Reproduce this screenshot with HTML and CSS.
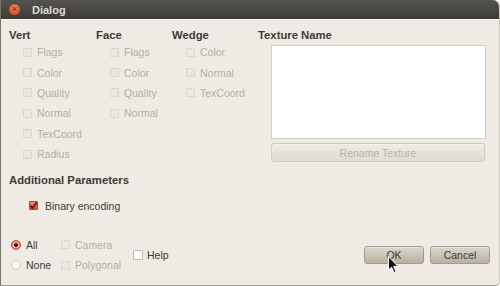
FILE: index.html
```html
<!DOCTYPE html>
<html lang="en">
<head>
    <title>Dialog</title>
    <link rel="stylesheet" href="styles.css">
</head>
<body>
    <div class="window">
        <div class="titlebar">
            <span class="close-btn">&times;</span>
            <span class="title">Dialog</span>
        </div>
        <div class="content">
            <div class="groups">
                <div class="group vert">
                    <h2>Vert</h2>
                    <ul class="checks">
                        <li class="check disabled"><span class="box"></span>Flags</li>
                        <li class="check disabled"><span class="box"></span>Color</li>
                        <li class="check disabled"><span class="box"></span>Quality</li>
                        <li class="check disabled"><span class="box"></span>Normal</li>
                        <li class="check disabled"><span class="box"></span>TexCoord</li>
                        <li class="check disabled"><span class="box"></span>Radius</li>
                    </ul>
                </div>
                <div class="group face">
                    <h2>Face</h2>
                    <ul class="checks">
                        <li class="check disabled"><span class="box"></span>Flags</li>
                        <li class="check disabled"><span class="box"></span>Color</li>
                        <li class="check disabled"><span class="box"></span>Quality</li>
                        <li class="check disabled"><span class="box"></span>Normal</li>
                    </ul>
                </div>
                <div class="group wedge">
                    <h2>Wedge</h2>
                    <ul class="checks">
                        <li class="check disabled"><span class="box"></span>Color</li>
                        <li class="check disabled"><span class="box"></span>Normal</li>
                        <li class="check disabled"><span class="box"></span>TexCoord</li>
                    </ul>
                </div>
                <div class="group texture">
                    <h2>Texture Name</h2>
                    <div class="texture-list"></div>
                    <button class="btn rename" disabled>Rename Texture</button>
                </div>
            </div>

            <h2 class="params-title">Additional Parameters</h2>
            <div class="check binary"><span class="box checked">
                <svg width="9" height="9" viewBox="0 0 9 9"><path d="M1.5 4.5 L3.6 7 L7.6 1.6" fill="none" stroke="#3a1d18" stroke-width="1.6"/></svg>
            </span>Binary encoding</div>

            <div class="bottom">
                <div class="radios">
                    <div class="radio"><span class="dot selected"></span>All</div>
                    <div class="radio"><span class="dot"></span>None</div>
                </div>
                <div class="extra">
                    <div class="check disabled"><span class="box"></span>Camera</div>
                    <div class="check disabled"><span class="box"></span>Polygonal</div>
                </div>
                <div class="check help"><span class="box"></span>Help</div>
                <div class="actions">
                    <button class="btn">OK</button>
                    <button class="btn">Cancel</button>
                </div>
            </div>
        </div>

        <!-- mouse pointer resting on OK -->
        <svg class="cursor" width="12" height="18" viewBox="0 0 12 18">
            <path d="M0.5 0.5 L0.5 14 L3.6 11.2 L6 16.6 L8 15.7 L5.7 10.5 L10 10.5 Z" fill="#111" stroke="#fff" stroke-width="1"/>
        </svg>
    </div>
</body>
</html>
```

FILE: styles.css
```css
html {
    background: #f4f4f2;
}

body {
    margin: 0;
    font-family: 'Liberation Sans', Arial, sans-serif;
    font-size: 10.5px;
    color: #3c3b37;
}

.window {
    position: relative;
    width: 500px;
    height: 286px;
    box-sizing: border-box;
    background-color: #efebe4;
    border-left: 1px solid #7a746a;
    border-right: 1px solid #cdc7bd;
    border-bottom: 1px solid #9f988c;
    border-radius: 0 7px 5px 0;
    overflow: hidden;
}

.titlebar {
    height: 19px;
    display: flex;
    align-items: center;
    background: linear-gradient(#54534e, #3c3b37);
    border-bottom: 1px solid #f8f6f2;
}

.close-btn {
    width: 11px;
    height: 11px;
    margin: 0 12px 0 8px;
    border-radius: 50%;
    background: radial-gradient(circle at 50% 35%, #f58a62, #d9522a 65%, #a8391b);
    color: #5a1f0e;
    font-size: 9px;
    line-height: 11px;
    text-align: center;
}

.title {
    color: #dfdbd2;
    font-weight: bold;
    font-size: 11px;
}

.content {
    padding: 9px 9px 0 8px;
}

h2 {
    margin: 0;
    font-size: 11.3px;
    line-height: 12px;
    font-weight: bold;
    color: #3c3b37;
}

.groups {
    display: flex;
}

.group.vert { width: 87px; }
.group.face { width: 76px; }
.group.wedge { width: 86px; }
.group.texture { width: 228px; }

.checks {
    list-style: none;
    margin: 1px 0 0;
    padding: 0 0 0 14px;
}

.check {
    display: flex;
    align-items: center;
    height: 20.4px;
}

.box {
    width: 9px;
    height: 9px;
    box-sizing: border-box;
    margin-right: 5px;
    border: 1px solid #a9a397;
    border-radius: 1px;
    background: linear-gradient(#ffffff, #f1eee9);
}

.check.disabled {
    color: #b6ae9f;
}

.check.disabled .box {
    border-color: #dcd6cc;
    background: #ebe7e0;
}

.box.checked {
    border-color: #b2402f;
    background: linear-gradient(#ef8a78, #d44a36);
}

.box.checked svg {
    display: block;
    margin: -1px 0 0 -1px;
}

.texture-list {
    width: 215px;
    height: 94px;
    box-sizing: border-box;
    margin: 4px 0 0 13px;
    background: #fff;
    border: 1px solid #d3cdc3;
}

.btn {
    font-family: inherit;
    font-size: 10.5px;
    color: #3c3b37;
    padding: 0;
    border: 1px solid #a39b8c;
    border-radius: 3px;
    background: linear-gradient(#dcd6cc, #b9b0a1);
    box-shadow: inset 0 1px 0 rgba(255,255,255,0.35);
}

.btn.rename {
    width: 214px;
    height: 19px;
    margin: 4px 0 0 13px;
    color: #bbb3a5;
    border-color: #d0c9bd;
    background: linear-gradient(#f0ece5, #e0dad0);
}

.params-title {
    margin-top: 10px;
}

.check.binary {
    margin-top: 9px;
    padding-left: 20px;
}

.check.binary .box {
    margin-right: 7px;
}

.bottom {
    display: flex;
    align-items: center;
    margin-top: 19px;
}

.radios {
    width: 50px;
    padding-left: 2px;
}

.radio {
    display: flex;
    align-items: center;
    height: 20.5px;
}

.dot {
    width: 10px;
    height: 10px;
    box-sizing: border-box;
    margin-right: 5px;
    border-radius: 50%;
    border: 1px solid #cfc9bf;
    background: radial-gradient(circle at 50% 40%, #ffffff, #f3f0ec);
}

.dot.selected {
    border-color: #c3423a;
    background: radial-gradient(circle, #3a1a16 0 1.6px, #f6c8c0 2.2px, #e4655a 4.5px);
}

.extra {
    width: 72px;
}

.extra .check {
    height: 20.5px;
}

.check.help .box {
    width: 10px;
    height: 10px;
    margin-right: 4px;
    border-color: #b9b3a8;
    background: #fff;
}

.actions {
    display: flex;
    gap: 6px;
    margin-left: auto;
    margin-top: -1px;
}

.actions .btn {
    width: 60px;
    height: 18px;
}

.cursor {
    position: absolute;
    left: 387px;
    top: 256px;
}
```
